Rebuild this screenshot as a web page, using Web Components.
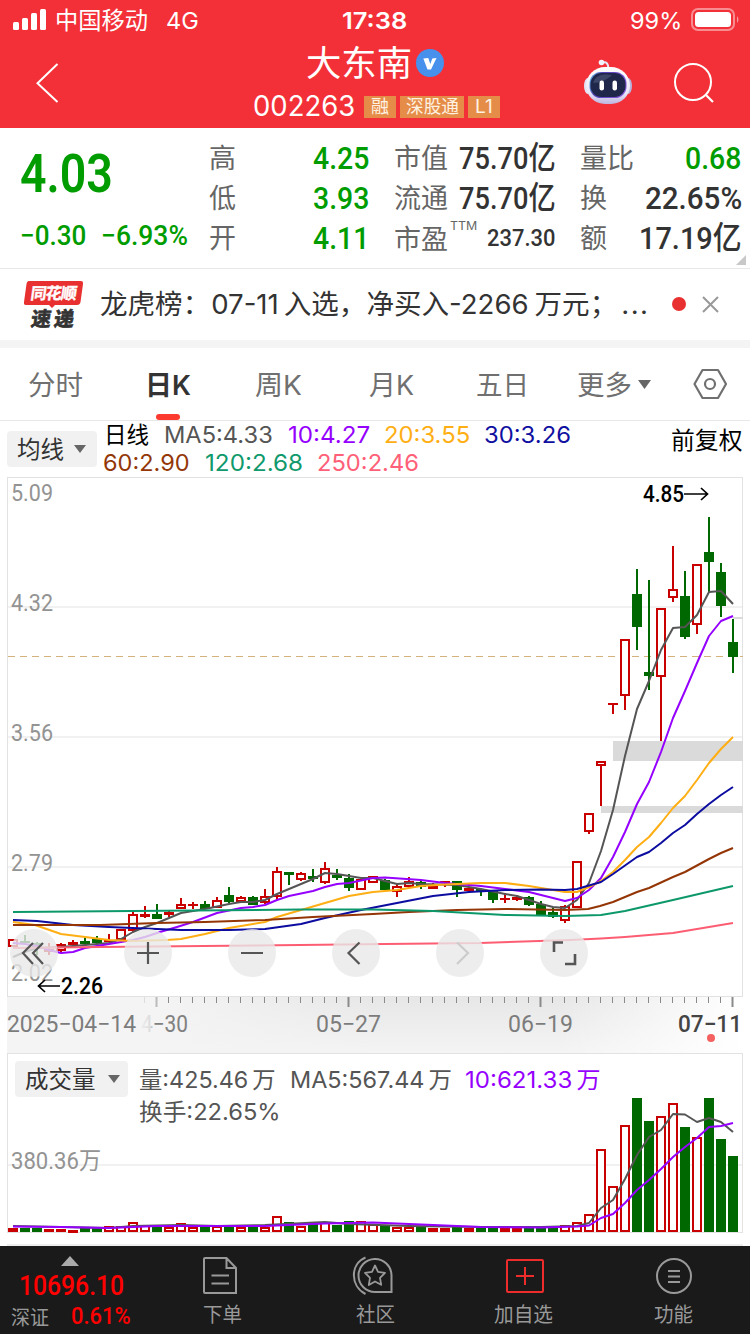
<!DOCTYPE html>
<html lang="zh-CN">
<head>
<meta charset="utf-8">
<title>大东南 002263</title>
<style>
html,body{margin:0;padding:0;background:#fff}
body{width:750px;height:1334px;overflow:hidden;font-family:Inter,"Noto Sans CJK SC",sans-serif;color:#333;--din:Roboto,"Noto Sans CJK SC",sans-serif}
</style>
</head>
<body>
<stock-page></stock-page>
<script>
const define=(name,html,setup)=>{
  const t=document.createElement('template');
  t.innerHTML=html;
  customElements.define(name,class extends HTMLElement{
    constructor(){super();this.attachShadow({mode:'open'}).append(t.content.cloneNode(true));}
    connectedCallback(){if(setup)setup.call(this,this.shadowRoot);}
  });
};

/* One line of text, scaled horizontally to the width in its "w" attribute. */
define('fit-text',`<style>
:host{display:inline-block;white-space:nowrap;flex:none;line-height:1.2}
span{display:inline-block;transform-origin:0 50%}
</style><span><slot></slot></span>`,function(root){
  const w=+this.getAttribute('w'),s=root.querySelector('span');
  this.style.width=w+'px';
  s.style.transform=`scaleX(${w/s.offsetWidth})`;
});

define('status-bar',`<style>
:host{display:grid;grid-template-columns:342px 288px 1fr;height:40px;align-items:center;font-size:23.500px;color:#fff}
div{display:flex;align-items:center}svg{display:block}
fit-text{padding-top:2px}
</style>
<div><svg width="55" height="40" fill="#fff"><rect x="13" y="22" width="6" height="8" rx="1.5"/><rect x="22" y="18" width="6" height="12" rx="1.5"/><rect x="31" y="13" width="6" height="17" rx="1.5"/><rect x="40" y="9" width="6" height="21" rx="1.5"/></svg><fit-text w="93">中国移动</fit-text><fit-text w="33" style="margin-left:18px">4G</fit-text></div>
<div style="font-weight:600"><fit-text w="65">17:38</fit-text></div>
<div><fit-text w="52">99%</fit-text><svg width="60" height="40"><rect x="10" y="9" width="42" height="21" rx="6" fill="none" stroke="#fff" stroke-opacity=".45" stroke-width="2"/><rect x="13" y="12" width="36" height="15" rx="3.5" fill="#fff"/><path d="M55 16q3 3.500 0 7z" fill="#fff" opacity=".5"/></svg></div>`);

define('stock-tag',`<style>
:host{display:flex;height:22px;align-items:center;justify-content:center;background:#e58d48;color:#fff2e2;font-size:18px}
</style><slot></slot>`);

define('stock-header',`<style>
:host{display:grid;grid-template-columns:253px 257px 1fr;height:88px;color:#fff}
.name{display:flex;align-items:center;height:46px;padding-left:53px;font-size:35px;gap:4px}
.code{display:flex;align-items:center;height:42px;font-size:28px}
.code stock-tag{margin-left:4px}
svg{display:block}
</style>
<svg width="253" height="88"><path d="M57.500 24 37.500 43.200 57.500 62" fill="none" stroke="#fff" stroke-width="2"/></svg>
<div><div class="name"><fit-text w="106">大东南</fit-text><svg width="28" height="28"><circle cx="14" cy="14" r="14" fill="#4790ec"/><path d="M7.300 9.500 12.300 9 14.300 15 16.300 9.500 20.500 9 15 20.500 11.500 20.500Z" fill="#fff"/></svg></div>
<div class="code"><fit-text w="102">002263</fit-text><stock-tag style="width:32px;margin-left:9px"><fit-text w="18">融</fit-text></stock-tag><stock-tag style="width:64px"><fit-text w="53">深股通</fit-text></stock-tag><stock-tag style="width:32px"><fit-text w="18">L1</fit-text></stock-tag></div></div>
<svg width="240" height="88" viewBox="510 40 240 88"><defs><linearGradient id="h" x2="0" y2="1"><stop stop-color="#fff"/><stop offset=".7" stop-color="#e9e6f7"/><stop offset="1" stop-color="#bdb5df"/></linearGradient><linearGradient id="s" x2="1" y2=".3"><stop stop-color="#63c8e8"/><stop offset=".35" stop-color="#5142b8"/><stop offset="1" stop-color="#8055d8"/></linearGradient></defs>
<path d="M602 63Q608 60 608.500 69" fill="none" stroke="#e8e6f4" stroke-width="2"/><circle cx="601.500" cy="62.500" r="2.800" fill="#f2f0fa"/>
<ellipse cx="588" cy="86" rx="4" ry="8" fill="#e4e0f3"/><ellipse cx="628" cy="86" rx="4" ry="8" fill="#b9b3dc"/>
<rect x="586" y="67" width="44" height="37" rx="19" fill="url(#h)"/><rect x="589.500" y="72" width="37" height="26" rx="11.500" fill="url(#s)"/><rect x="590.500" y="73" width="35" height="24" rx="11" fill="#1f284b"/><path d="M593 83Q595 75 604 74.500 614 74 611 76 603 83 593 83" fill="#3c4668"/>
<rect x="599.500" y="80.500" width="4.500" height="10" rx="2.200" fill="#fff"/><rect x="612.500" y="80.500" width="4.500" height="10" rx="2.200" fill="#fff"/>
<circle cx="693" cy="82" r="18" fill="none" stroke="#fff" stroke-width="2"/><path d="m706 95 7 7" stroke="#fff" stroke-width="2.200"/></svg>`);

define('quote-cell',`<style>
:host{display:flex;justify-content:space-between;align-items:center;height:40px;font-size:27px;color:#666}
::slotted(.v){font:500 32px/1.2 var(--din);color:#333}
::slotted(.g){color:#009c00}
::slotted(:not(.v)){padding-top:2px}
</style><slot></slot>`);

define('quote-panel',`<style>
:host{display:grid;grid-template-columns:189px 160px 161px 161px;height:141px;padding-left:20px;box-sizing:border-box;border-bottom:1px solid #e8e8e8;position:relative;color:#009c00}
.p{font:600 54px/64px var(--din);padding-top:14px;height:64px}
.c{font:500 28px/34px var(--din);display:flex;gap:15px;padding-top:13px}
.col{padding-top:10px}
.col+.col{margin-left:25px;margin-right:-25px}
.col:last-of-type{margin-left:50px;margin-right:-50px}
svg{position:absolute;right:4px;bottom:3px}
</style>
<div><div class="p"><fit-text w="93">4.03</fit-text></div><div class="c"><fit-text w="66">−0.30</fit-text><fit-text w="87">−6.93%</fit-text></div></div>
<div class="col"><quote-cell><fit-text w="27">高</fit-text><fit-text class="v g" w="56">4.25</fit-text></quote-cell><quote-cell><fit-text w="27">低</fit-text><fit-text class="v g" w="56">3.93</fit-text></quote-cell><quote-cell><fit-text w="27">开</fit-text><fit-text class="v g" w="56">4.11</fit-text></quote-cell></div>
<div class="col"><quote-cell><fit-text w="54">市值</fit-text><fit-text class="v" w="97" style="margin-right:-1px">75.70亿</fit-text></quote-cell><quote-cell><fit-text w="54">流通</fit-text><fit-text class="v" w="97" style="margin-right:-1px">75.70亿</fit-text></quote-cell><quote-cell><fit-text w="54" style="padding-top:5px">市盈</fit-text><fit-text w="27" style="font-size:11.500px;margin:-24px 7px 0 -2px">TTM</fit-text><fit-text class="v" w="68" style="font-size:24.500px">237.30</fit-text></quote-cell></div>
<div class="col"><quote-cell><fit-text w="54">量比</fit-text><fit-text class="v g" w="56">0.68</fit-text></quote-cell><quote-cell><fit-text w="27">换</fit-text><fit-text class="v" w="97" style="margin-right:-1px">22.65%</fit-text></quote-cell><quote-cell><fit-text w="27">额</fit-text><fit-text class="v" w="103" style="margin-right:-1px">17.19亿</fit-text></quote-cell></div>
<svg width="10" height="10"><path d="M10 0V10H0Z" fill="#c8c8c8"/></svg>`);

define('news-strip',`<style>
:host{display:flex;height:71px;align-items:center;padding-left:24px;border-bottom:8px solid #f4f4f4;font-size:27.500px}
.logo{width:76px;height:56px;flex:none}
.dot{width:14px;height:14px;border-radius:50%;background:#e93030;margin:-2px 15px 0 22px}
.dot+svg{margin-top:-2px}
</style>
<svg class="logo" viewBox="24 276 76 56"><path d="M29 280H81Q83.500 280 83 283L80.500 301Q80 304 77 304H55L52 307 49 304H26Q23.500 304 24 301L26.500 283Q27 280 29 280Z" fill="#e93030"/><g font-family="Noto Sans CJK SC" font-weight="700" transform="skewX(-8)"><text x="72" y="298" font-size="16" fill="#fff" stroke="#fff" stroke-width=".4" textLength="46">同花顺</text><text x="76" y="325" font-size="20" fill="#333" stroke="#333" stroke-width=".7" textLength="43">速递</text></g></svg>
<fit-text w="550">龙虎榜：<span style="margin:0 5px 0 1px">07-11</span>入选，净买入-2266<span style="margin-left:6px">万元；</span><span style="letter-spacing:1.500px;margin-left:4px">...</span></fit-text>
<div class="dot"></div><svg width="18" height="18"><path d="M2 2 17 17M17 2 2 17" stroke="#999" stroke-width="2"/></svg>`);

define('period-tabs',`<style>
:host{display:grid;grid-template-columns:119px 108px 114px 107px 101px 116px 1fr;height:72px;padding-left:28px;border-bottom:1px solid #e8e8e8;font-size:27.500px;color:#707070;align-items:center}
.on{color:#333;font-weight:600;height:72px;display:flex;align-items:center;position:relative}
.on:after{content:"";position:absolute;left:9px;bottom:0;width:24px;height:6px;border-radius:3px;background:#fd3a30}
.more{display:flex;align-items:center;gap:6px}
fit-text{padding-top:2px}
</style>
<fit-text w="55">分时</fit-text><div class="on"><fit-text w="46" style="margin-left:-2px">日K</fit-text></div><fit-text w="47">周K</fit-text><fit-text w="45">月K</fit-text><fit-text w="53">五日</fit-text><div class="more"><fit-text w="55">更多</fit-text><svg width="13" height="9"><path d="M0 0H13L6.500 9Z" fill="#666"/></svg></div>
<svg width="36" height="32" fill="none" stroke="#707070" stroke-width="2.200"><path d="M9.500 2H25L33 16 25 30H9.500L1.500 16Z" stroke-linejoin="round"/><circle cx="17" cy="16" r="5"/></svg>`);

define('drop-button',`<style>
:host{display:flex;height:36px;box-sizing:border-box;align-items:center;justify-content:space-between;padding:3px 10px 0;background:#f1f1f1;border-radius:4px;color:#333;font-size:23.500px}
svg{display:block;margin-top:-3px}
</style><slot></slot><svg width="12" height="8"><path d="M0 0H12L6 8Z" fill="#666"/></svg>`);

define('ma-legend',`<style>
:host{display:grid;grid-template-columns:97px 567px 1fr;height:56px;padding-left:7px;font-size:23px}
drop-button{width:90px;margin-top:10px;padding-right:11px}
.r{display:flex;height:28px;align-items:center;gap:15px}
.r fit-text{padding-top:1px}
</style>
<drop-button><fit-text w="47">均线</fit-text></drop-button>
<div><div class="r"><fit-text w="45" style="color:#000">日线</fit-text><fit-text w="109" style="color:#555">MA5:4.33</fit-text><fit-text w="82" style="color:#9500ff">10:4.27</fit-text><fit-text w="86" style="color:#ffae14;margin-left:-1px">20:3.55</fit-text><fit-text w="87" style="color:#1010a0;margin-left:-1px">30:3.26</fit-text></div>
<div class="r"><fit-text w="87" style="color:#933709;margin-left:-1px">60:2.90</fit-text><fit-text w="98" style="color:#10996c">120:2.68</fit-text><fit-text w="102" style="color:#ff6078;margin-left:-1px">250:2.46</fit-text></div></div>
<fit-text w="72" style="color:#000;font-size:23.500px;margin-top:6px">前复权</fit-text>`);

const G='#006800',R='#c80000';
const line=(pts,c)=>`<polyline fill="none" stroke="${c}" stroke-width="2" stroke-linejoin="round" points="${pts}"/>`;

/* direction (r = hollow up, f = flat up, g = down), body top, body bottom, high, low */
const K=`r939 947 939 947|g941 943 935 944|g943 948 942 955|f949 952 943 955|r944 951 943 952|f942 945 940 945|g941 944 937 944|g939 943 936 944|f940 942 934 942|r929 940 929 940|r914 931 911 932|f914 917 906 918|g914 919 904 919|f912 915 910 917|r904 909 898 909|f904 906 902 909|g904 909 901 909|r900 908 897 908|g895 902 887 903|r897 902 896 902|g897 905 896 905|r896 903 889 904|r871 897 867 900|g872 875 872 885|r873 880 872 881|g876 879 869 882|r868 883 862 884|g875 878 869 880|g878 888 874 891|r879 890 879 890|r876 883 876 883|g880 890 879 890|r886 892 884 897|r881 887 877 888|g882 887 881 889|r886 889 883 889|f881 883 881 887|g881 890 881 897|f888 891 887 893|g889 891 889 896|g891 900 891 903|f898 900 893 903|f897 900 895 901|g897 905 896 906|g904 915 901 915|g912 917 908 918|r906 921 905 923|r861 908 861 908|r813 832 813 834|r761 766 761 806|f703 705 703 714|r639 696 639 710|g594 627 569 650|g672 676 580 690|r608 677 608 741|r589 598 546 602|g596 637 571 639|r564 625 564 634|g552 562 517 593|g572 606 563 617|g642 657 619 673`.split('|').map(s=>[s[0],...s.slice(1).split(' ').map(Number)]);
const candles=K.map(([t,a,b,h,l],i)=>{
  const x=13+12*i,c=t==='g'?G:R;
  return `<path d="M${x} ${h}V${t==='r'?a:l}M${x} ${b}V${l}" stroke="${c}" stroke-width="2"/>`+
    (t==='r'?`<rect x="${x-4}" y="${a+1}" width="8" height="${b-a-2}" fill="#fff" stroke="${c}" stroke-width="2"/>`:`<rect x="${x-5}" y="${a}" width="10" height="${b-a}" fill="${c}"/>`);
}).join('');
let ticks='';
for(let i=11;i<=60;i++){const m=[12,28,44,60].includes(i);ticks+=`<path d="M${13+12*i-.5} 997V${m?1007:1003}" stroke="${i===11?'#ddd':i===12?'#bbb':'#8a8a8a'}" stroke-width="${m?2:1}"/>`;}
const T=(x,y,w,s,size,fill,weight=400)=>`<text x="${x}" y="${y}" textLength="${w}" lengthAdjust="spacingAndGlyphs" font-size="${size}" fill="${fill}" font-weight="${weight}">${s}</text>`;

define('kline-chart',`<style>:host{display:block;height:576px}svg{display:block;font-family:var(--din)}</style>
<svg width="750" height="576" viewBox="0 477 750 576">
<defs><linearGradient id="ax" x2="0" y2="1"><stop stop-color="#e7e7e7"/><stop offset="1" stop-color="#f4f4f4"/></linearGradient><linearGradient id="l"><stop offset="0" stop-color="#f4f4f4"/><stop offset=".2" stop-color="#f4f4f4"/><stop offset=".5" stop-color="#f4f4f4" stop-opacity="0"/></linearGradient><linearGradient id="rt"><stop offset="0" stop-color="#fff" stop-opacity="0"/><stop offset="1" stop-color="#fff"/></linearGradient><linearGradient id="fade" gradientUnits="userSpaceOnUse" x1="139" x2="155"><stop stop-color="#f0f0f0"/><stop offset=".7" stop-color="#ddd"/><stop offset="1" stop-color="#808080"/></linearGradient></defs>
<rect x="7" y="997" width="736" height="56" fill="url(#ax)"/><rect x="7" y="997" width="736" height="56" fill="url(#l)"/><rect x="560" y="997" width="183" height="56" fill="url(#rt)"/>
<rect x="7.500" y="477.500" width="735" height="519" fill="#fff" stroke="#e2e2e2"/>
<path d="M8 607H742M8 737H742M8 867H742" stroke="#f1f1f1" stroke-width="2"/>
<path d="M613 741H743V761H613ZM601 806H743V813H601ZM733 617H743V619H733Z" fill="#dadada"/>
<path d="M8 656.500H743" stroke="#d5b27c" stroke-dasharray="7 5"/>
${T(11,501,42,'5.09',23.500,'#939393')}${T(11,611,42,'4.32',23.500,'#939393')}${T(11,741,42,'3.56',23.500,'#939393')}${T(11,871,42,'2.79',23.500,'#939393')}${T(11,981,42,'2.02',23.500,'#939393')}
${candles}
${line('13,957 25,952 37,948 61,947 85,945 109,943 121,939 133,932 145,927 157,923 181,913 205,909 229,904 241,902 253,902 265,900 277,894 289,889 301,884 313,879 325,873 337,874 349,876 361,878 373,878 385,881 397,884 409,883 421,884 457,885 469,887 481,889 505,894 517,896 529,900 541,904 553,907 565,908 577,900 589,883 601,851 613,810 625,756 637,709 649,681 661,650 673,628 685,627 697,615 709,592 721,591 733,604','#555')}
${line('13,943 25,944 37,946 49,950 61,953 73,952 85,948 121,942 133,940 145,937 160,932 177,927 193,922 217,913 241,908 253,907 265,905 277,900 289,896 313,891 325,887 337,884 349,883 373,878 385,877.500 421,880 445,883 481,886 505,889 529,892 553,898 565,901 577,898 589,890 601,878 613,857 625,832 637,804 649,782 661,752 673,718 685,691 697,663 709,636 721,621 733,616','#9500ff')}
${line('13,922 35,925 61,934 85,937 109,940 133,941 167,940 181,939 205,934 229,928 253,924 265,922 277,917 301,910 325,903 349,896 373,892 397,890 421,886 445,884.500 481,883 505,883 529,886 553,890 565,892 577,892 589,887 601,881 613,872 625,860 637,847 649,837 661,823 673,808 685,796 697,780 709,763 721,749 733,737','#ffae14')}
${line('13,920 37,921 73,925 109,927 181,930 229,930 265,929 301,924 325,918 361,910 397,903 433,896 469,892 505,890 541,889.500 565,890 577,889 601,882 613,874 637,857 649,852 661,843 673,833 685,825 697,814 709,804 721,795 733,787','#0c0ca0')}
${line('13,925 100,925 157,923 205,922 265,920 313,917 373,914 409,912 457,910 505,909 565,910 588,909 600,906 613,902 637,892 649,888 673,877 685,872 709,859 721,853 733,848','#933505')}
${line('13,912 133,911 301,909.500 373,909.500 433,911 505,915 565,916 601,915 625,911 673,900 733,886','#0c986a')}
${line('13,948 100,947 300,945 385,944 480,943 570,940 601,938.500 625,937 673,933 733,923','#fd5d72')}
<g fill="#e8e8e8" fill-opacity=".8"><circle cx="34" cy="953" r="24"/><circle cx="148" cy="953" r="24"/><circle cx="252" cy="953" r="24"/><circle cx="356" cy="953" r="24"/><circle cx="460" cy="953" r="24"/><circle cx="564" cy="953" r="24"/></g>
<g fill="none" stroke="#555" stroke-width="2.200"><path d="M33 943 23 953 33 964M43 943 33 953 43 964M137 953H159M148 942V964M241 953H263M359.500 942.500 348.500 953 359.500 964"/><path d="M457 942.500 468 953 457 964" stroke="#ccc"/><path d="M554 952V942.500H563M575 954V964H565" stroke-width="2.600"/></g>
${T(643,502,41,'4.85',23,'#000',500)}<path d="M684 494H707M701 488 707.500 494 701 500M60 986H39M45 980 38.500 986 45 992" fill="none" stroke="#000" stroke-width="1.700"/>${T(61,994,42,'2.26',23,'#000',500)}
${ticks}
${T(7,1032,129,'2025−04−14',23.500,'#7c7c7c')}${T(141,1032,47,'4−30',23.500,'url(#fade)')}${T(316,1032,65,'05−27',23.500,'#7c7c7c')}${T(508,1032,65,'06−19',23.500,'#7c7c7c')}${T(678,1032,64,'07−11',23.500,'#444',500)}
<circle cx="711" cy="1038" r="4" fill="#f56060"/></svg>`);

const V=[533,535,535,537,537,539,534,530,529,528,516,525,528,530,520,530,530,528,526,530,532,530,499,517,528,523,515,524,512,514,522,527,530,530,530,534,533,531,533,533,532,535,535,535,533,528,524,515,491,298,407,225,145,214,199,160,232,262,144,267,319];
const bars=V.map((v,i)=>{
  const x=13+12*i,y=Math.round(1050+v/3);
  return K[i][0]==='g'?`<rect x="${x-5}" y="${y}" width="10" height="${1232-y}" fill="${G}"/>`:`<rect x="${x-4}" y="${y+1}" width="8" height="${Math.max(1,1230-y)}" fill="#fff" stroke="${R}" stroke-width="2"/>`;
}).join('');

define('volume-chart',`<style>
:host{display:grid;height:193px;font-size:23px;color:#555}
svg,.t{grid-area:1/1}svg{display:block;font-family:var(--din)}
.t{z-index:1;padding:8px 0 0 15px;display:grid;grid-template-columns:124px 1fr;align-content:start}
.a{display:flex;height:36px;align-items:center;gap:14px;padding-top:2px}.b{display:flex;height:28px;align-items:center}
drop-button{width:113px;padding-right:8px}
</style>
<svg width="750" height="193" viewBox="0 1053 750 193"><rect x="7.500" y="1053.500" width="735" height="179" fill="#fff" stroke="#e2e2e2"/><path d="M8 1165H742" stroke="#f1f1f1" stroke-width="2"/><rect x="7" y="1244" width="736" height="2" fill="#eee"/>
${T(11,1169,90,'380.36万',23.500,'#939393')}
${bars}
${line('13,1226 61,1227 109,1228 133,1226 181,1225 217,1226 265,1225 325,1222 349,1224 409,1226 481,1227 541,1227 577,1226 589,1223 601,1208 613,1200 625,1179 637,1155 649,1137 661,1130 673,1114 685,1114.500 697,1122 709,1118 721,1122 733,1132','#555')}
${line('13,1226.500 61,1227 109,1228 157,1226 265,1226 325,1223.500 373,1222.500 433,1225 481,1227 541,1227.500 577,1226.500 589,1225.500 601,1218 613,1214 625,1203 637,1190 649,1180 661,1169 673,1157 685,1147 697,1138 709,1127 721,1126 733,1123','#9500ff')}</svg>
<div class="t"><drop-button><fit-text w="71">成交量</fit-text></drop-button><div><div class="a"><fit-text w="137">量:425.46<span style="margin-left:4px">万</span></fit-text><fit-text w="162">MA5:567.44<span style="margin-left:4px">万</span></fit-text><fit-text w="136" style="color:#9500ff;margin-left:-1px">10:621.33<span style="margin-left:4px">万</span></fit-text></div><div class="b"><fit-text w="142">换手:22.65%</fit-text></div></div></div>`);

define('nav-item',`<style>
:host{display:flex;flex-direction:column;align-items:center;padding-top:10px;font-size:20px;color:#999}
</style><slot name="icon"></slot><slot></slot>`);

define('bottom-nav',`<style>
:host{display:grid;grid-template-columns:147px 150px 156px 140px 161px;height:88px;background:#1a1a1a;color:#f00;font-family:var(--din)}
.x{height:88px}
.x>svg{display:block;margin:10px 0 0 61px}
.n{font:500 27.500px/32px var(--din);padding:3px 0 0 19px;height:32px}
.m{display:flex;align-items:center;height:31px;padding-left:11px;font-size:23px;font-weight:500}
nav-item svg{display:block;height:40px;margin-bottom:7px;fill:none;stroke:#999;stroke-width:2}
</style>
<div class="x"><svg width="18" height="10"><path d="M9 0 18 10H0Z" fill="#aaa"/></svg><div class="n"><fit-text w="105">10696.10</fit-text></div><div class="m"><fit-text w="38" style="font:400 20px/24px 'Noto Sans CJK SC';color:#999;margin-right:22px">深证</fit-text><fit-text w="60">0.61%</fit-text></div></div>
<nav-item><svg slot="icon" width="36" height="40" style="margin-left:-4px"><path d="M3 2H24.500L34 12V37H3Q2 37 2 36V3Q2 2 3 2ZM24.500 2V12H34M9.500 19.500H27M9.500 27.500H27"/></svg><fit-text w="39">下单</fit-text></nav-item>
<nav-item><svg slot="icon" width="42" height="40" style="margin-left:-4px"><path d="M13.500 1.500C-2 8-2 30 13.500 38M39.500 36V19A16.500 16.500 0 1 0 23 36H39.500Z"/><path d="m23 9.500 3 6.300 7 1-5 5 1.200 7-6.200-3.300L16.800 29 18 21.800 13 16.900 20 15.800Z" stroke-linejoin="round" stroke-width="1.800"/></svg><fit-text w="39">社区</fit-text></nav-item>
<nav-item><svg slot="icon" width="40" height="40" style="stroke:#ee2c2c;margin-left:4px"><rect x="2" y="4" width="36" height="32" rx="1"/><path d="M20 11V29M11 20H29"/></svg><fit-text w="59">加自选</fit-text></nav-item>
<nav-item><svg slot="icon" width="38" height="40"><circle cx="19" cy="20" r="17"/><path d="M13 15H25M13 20.500H25M13 26H25"/></svg><fit-text w="39">功能</fit-text></nav-item>`);

define('stock-page',`<style>:host{display:block;width:750px;height:1334px;background:#fff}header{background:#f33038;height:128px}</style>
<header><status-bar></status-bar><stock-header></stock-header></header>
<quote-panel></quote-panel><news-strip></news-strip><period-tabs></period-tabs><ma-legend></ma-legend><kline-chart></kline-chart><volume-chart></volume-chart><bottom-nav></bottom-nav>`);
</script>
</body>
</html>
